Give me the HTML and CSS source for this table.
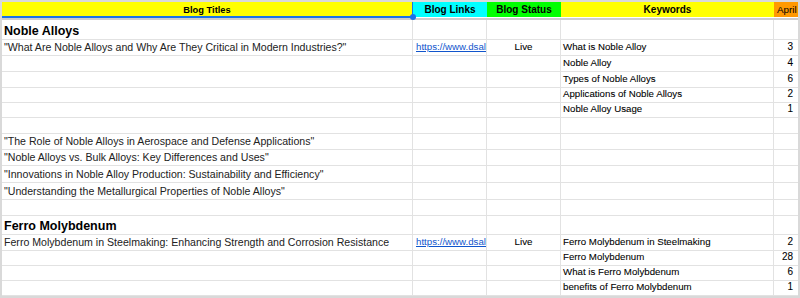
FILE: index.html
```html
<!DOCTYPE html>
<html lang="en">
<head>
<meta charset="utf-8">
<title>Blog Tracker</title>
<link rel="stylesheet" href="styles.css">
</head>
<body>
<div class="sheet">
  <div class="row hdr">
    <div class="hc hc-titles">Blog Titles<span class="handle"></span></div>
    <div class="hc hc-links">Blog Links</div>
    <div class="hc hc-status">Blog Status</div>
    <div class="hc hc-kw">Keywords</div>
    <div class="hc hc-apr">April</div>
  </div>
  <div class="freeze"></div>

  <div class="row h20">
    <div class="cell head">Noble Alloys</div><div class="cell"></div><div class="cell"></div><div class="cell"></div><div class="cell"></div>
  </div>
  <div class="row h16">
    <div class="cell title">"What Are Noble Alloys and Why Are They Critical in Modern Industries?"</div>
    <div class="cell link"><a href="#">https://www.dsal</a></div>
    <div class="cell status">Live</div>
    <div class="cell kw">What is Noble Alloy</div>
    <div class="cell num">3</div>
  </div>
  <div class="row h16">
    <div class="cell"></div><div class="cell"></div><div class="cell"></div>
    <div class="cell kw">Noble Alloy</div>
    <div class="cell num">4</div>
  </div>
  <div class="row h16">
    <div class="cell"></div><div class="cell"></div><div class="cell"></div>
    <div class="cell kw">Types of Noble Alloys</div>
    <div class="cell num">6</div>
  </div>
  <div class="row h15">
    <div class="cell"></div><div class="cell"></div><div class="cell"></div>
    <div class="cell kw">Applications of Noble Alloys</div>
    <div class="cell num">2</div>
  </div>
  <div class="row h15">
    <div class="cell"></div><div class="cell"></div><div class="cell"></div>
    <div class="cell kw">Noble Alloy Usage</div>
    <div class="cell num">1</div>
  </div>
  <div class="row h16">
    <div class="cell"></div><div class="cell"></div><div class="cell"></div><div class="cell"></div><div class="cell"></div>
  </div>
  <div class="row h16">
    <div class="cell title">"The Role of Noble Alloys in Aerospace and Defense Applications"</div>
    <div class="cell"></div><div class="cell"></div><div class="cell"></div><div class="cell"></div>
  </div>
  <div class="row h16">
    <div class="cell title">"Noble Alloys vs. Bulk Alloys: Key Differences and Uses"</div>
    <div class="cell"></div><div class="cell"></div><div class="cell"></div><div class="cell"></div>
  </div>
  <div class="row h17">
    <div class="cell title">"Innovations in Noble Alloy Production: Sustainability and Efficiency"</div>
    <div class="cell"></div><div class="cell"></div><div class="cell"></div><div class="cell"></div>
  </div>
  <div class="row h17">
    <div class="cell title">"Understanding the Metallurgical Properties of Noble Alloys"</div>
    <div class="cell"></div><div class="cell"></div><div class="cell"></div><div class="cell"></div>
  </div>
  <div class="row h16">
    <div class="cell"></div><div class="cell"></div><div class="cell"></div><div class="cell"></div><div class="cell"></div>
  </div>

  <div class="row h19">
    <div class="cell head">Ferro Molybdenum</div><div class="cell"></div><div class="cell"></div><div class="cell"></div><div class="cell"></div>
  </div>
  <div class="row h16">
    <div class="cell title">Ferro Molybdenum in Steelmaking: Enhancing Strength and Corrosion Resistance</div>
    <div class="cell link"><a href="#">https://www.dsal</a></div>
    <div class="cell status">Live</div>
    <div class="cell kw">Ferro Molybdenum in Steelmaking</div>
    <div class="cell num">2</div>
  </div>
  <div class="row h15">
    <div class="cell"></div><div class="cell"></div><div class="cell"></div>
    <div class="cell kw">Ferro Molybdenum</div>
    <div class="cell num">28</div>
  </div>
  <div class="row h15">
    <div class="cell"></div><div class="cell"></div><div class="cell"></div>
    <div class="cell kw">What is Ferro Molybdenum</div>
    <div class="cell num">6</div>
  </div>
  <div class="row h15">
    <div class="cell"></div><div class="cell"></div><div class="cell"></div>
    <div class="cell kw">benefits of Ferro Molybdenum</div>
    <div class="cell num">1</div>
  </div>
</div>
</body>
</html>
```

FILE: styles.css
```css
* { box-sizing: border-box; }
html, body { margin: 0; padding: 0; background: #ffffff; }
body { font-family: "Liberation Sans", Arial, sans-serif; }

.sheet {
  width: 800px;
  height: 298px;
  border: 2px solid #d9d9d9;
  overflow: hidden;
  background: #ffffff;
}

.row {
  display: grid;
  grid-template-columns: 411px 74px 74px 213px 24px;
}

/* header */
.hdr {
  height: 16px;
  align-items: start;
  font-size: 10px;
  font-weight: bold;
  color: #000;
}
.hc {
  height: 15px;
  display: flex;
  align-items: center;
  justify-content: center;
  white-space: nowrap;
  overflow: hidden;
  line-height: 12px;
}
.hc-titles {
  background: #ffff00;
  height: 16px;
  border-bottom: 2px solid #1a73e8;
  border-right: 1px solid #1a73e8;
  position: relative;
  overflow: visible;
  font-size: 9.3px;
  padding-top: 1px;
}
.handle {
  position: absolute;
  right: -4px;
  bottom: -4px;
  width: 6px;
  height: 6px;
  border-radius: 50%;
  background: #1a73e8;
  z-index: 2;
}
.hc-links { background: #00ffff; }
.hc-status { background: #00ff00; }
.hc-kw { background: #ffff00; }
.hc-apr {
  background: #ff9900;
  font-weight: normal;
  justify-content: flex-start;
  padding-left: 3px;
  font-size: 9.8px;
}

.freeze { height: 2px; background: #cdcdcd; }

/* body rows */
.h15 { height: 15px; }
.h16 { height: 16px; }
.h17 { height: 17px; }
.h19 { height: 19px; }
.h20 { height: 20px; }

.cell {
  border-right: 1px solid #e2e2e2;
  border-bottom: 1px solid #e2e2e2;
  display: flex;
  align-items: flex-end;
  padding: 0 2px 2px 2px;
  white-space: nowrap;
  overflow: hidden;
  line-height: 12px;
  font-size: 10px;
  color: #222;
}
.row > .cell:last-child { border-right: none; }

.head {
  font-size: 12.5px;
  font-weight: bold;
  color: #000;
  line-height: 14px;
  padding-bottom: 1.5px;
}
.title { font-size: 10.6px; color: #222; }
.link { padding-left: 3px; font-size: 9.7px; }
.link a { color: #1155cc; text-decoration: underline; }
.status { justify-content: center; font-size: 9.8px; color: #000; -webkit-text-stroke: 0.08px #000; }
.kw { font-size: 9.7px; color: #000; -webkit-text-stroke: 0.08px #000; }
.num { justify-content: flex-end; padding-right: 5px; font-size: 10px; color: #000; -webkit-text-stroke: 0.08px #000; }
```
